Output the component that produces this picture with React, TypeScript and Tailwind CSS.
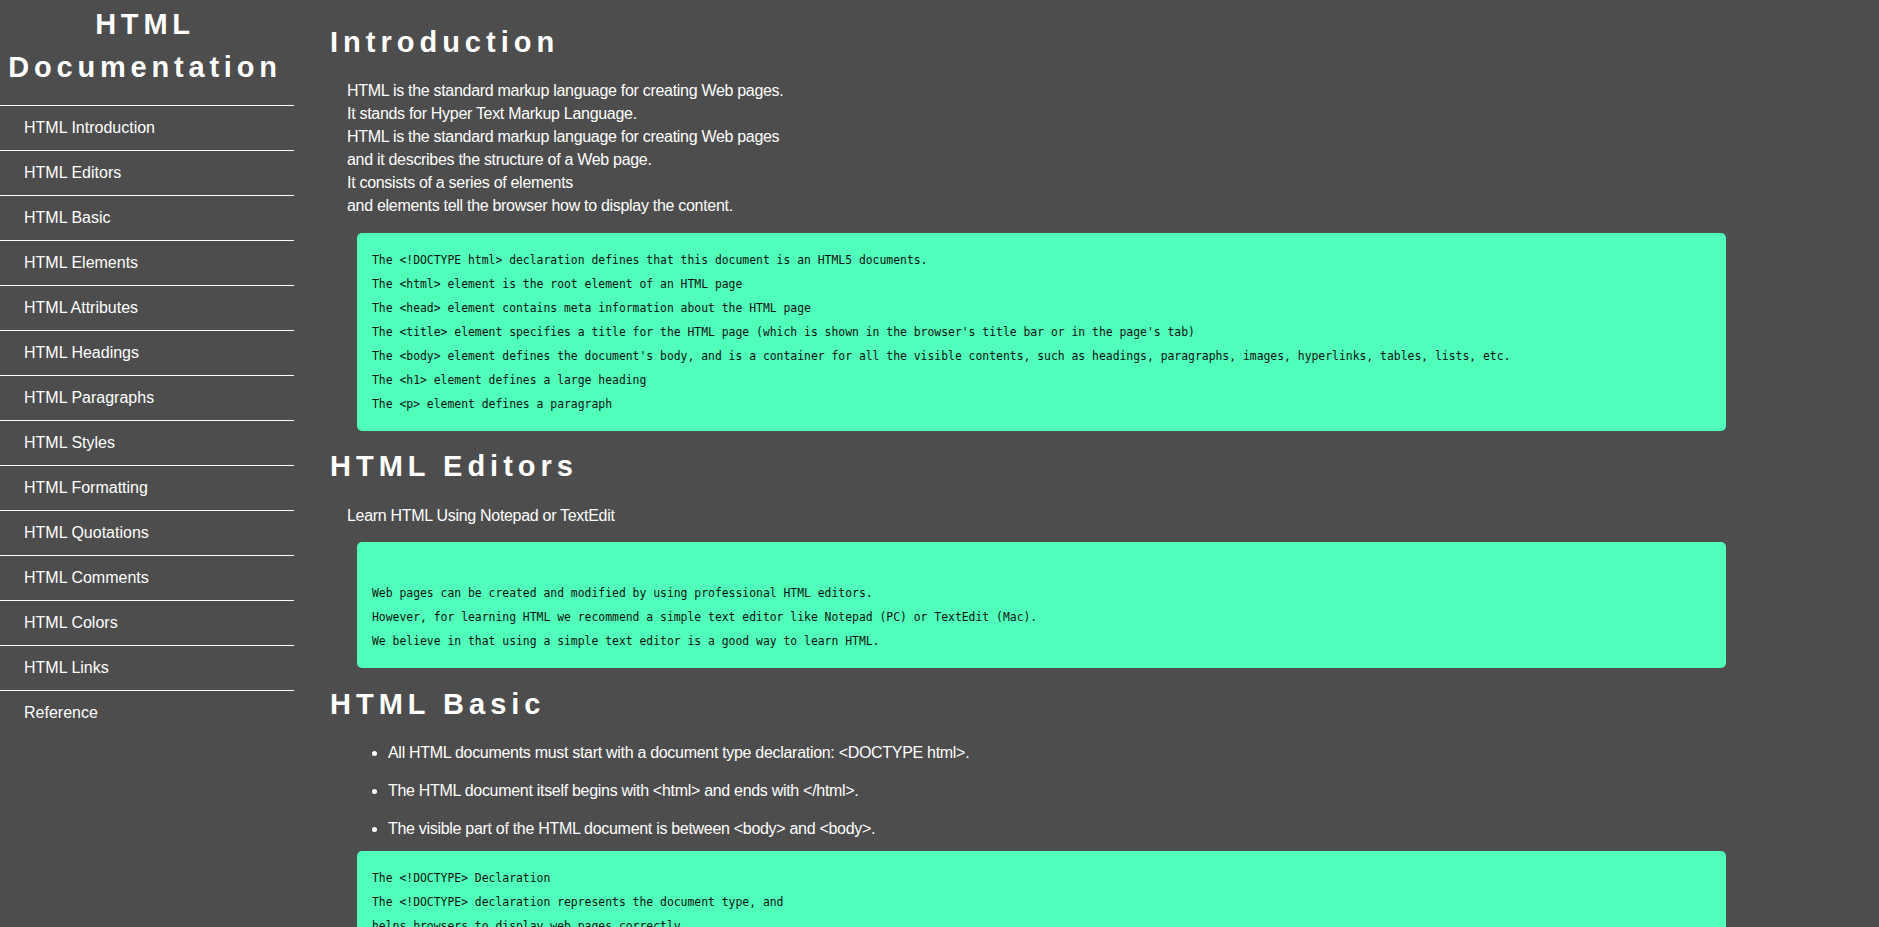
import React from "react";

const NAV = [
  "HTML Introduction",
  "HTML Editors",
  "HTML Basic",
  "HTML Elements",
  "HTML Attributes",
  "HTML Headings",
  "HTML Paragraphs",
  "HTML Styles",
  "HTML Formatting",
  "HTML Quotations",
  "HTML Comments",
  "HTML Colors",
  "HTML Links",
  "Reference",
];

const INTRO_CODE = [
  "The <!DOCTYPE html> declaration defines that this document is an HTML5 documents.",
  "The <html> element is the root element of an HTML page",
  "The <head> element contains meta information about the HTML page",
  "The <title> element specifies a title for the HTML page (which is shown in the browser's title bar or in the page's tab)",
  "The <body> element defines the document's body, and is a container for all the visible contents, such as headings, paragraphs, images, hyperlinks, tables, lists, etc.",
  "The <h1> element defines a large heading",
  "The <p> element defines a paragraph",
];

const EDITOR_CODE = [
  "",
  "Web pages can be created and modified by using professional HTML editors.",
  "However, for learning HTML we recommend a simple text editor like Notepad (PC) or TextEdit (Mac).",
  "We believe in that using a simple text editor is a good way to learn HTML.",
];

const BASIC_CODE = [
  "The <!DOCTYPE> Declaration",
  "The <!DOCTYPE> declaration represents the document type, and",
  "helps browsers to display web pages correctly.",
  "It must only appear once, at the top of the page (before any HTML tags).",
  "The <!DOCTYPE> declaration is not case sensitive.",
];

const CodeBox = ({ lines, className = "" }: { lines: string[]; className?: string }) => {
  return (
    <div
      className={`ml-[27px] w-[1369px] rounded-[5px] bg-[#50ffb9] px-[15px] py-[15px] text-[11.4px] leading-[24px] text-[#111] ${className}`}
      style={{ fontFamily: '"DejaVu Sans Mono", "Liberation Mono", monospace' }}
    >
      {lines.map((line, i) => (
        <div key={i} className="h-[24px] whitespace-pre">
          {line}
        </div>
      ))}
    </div>
  );
};

const Heading = ({ children, className = "" }: { children: React.ReactNode; className?: string }) => {
  return (
    <h1 className={`text-[29px] font-bold leading-[33px] tracking-[5px] text-white ${className}`}>
      {children}
    </h1>
  );
};

const Sidebar = () => {
  return (
    <nav className="flex w-[294px] shrink-0 flex-col">
      <div className="pr-[4px] pt-[3px] text-center text-[29px] font-bold leading-[43px] tracking-[4.8px] text-white">
        <div>HTML</div>
        <div>Documentation</div>
      </div>
      <ul className="mt-[16px]">
        {NAV.map((item) => (
          <li key={item} className="flex h-[45px] items-center border-t border-white pl-[24px] text-[16px] text-white">
            {item}
          </li>
        ))}
      </ul>
    </nav>
  );
};

export default function App() {
  return (
    <div
      className="flex h-[927px] w-full overflow-hidden bg-[#4d4d4d]"
      style={{ fontFamily: '"Liberation Sans", Arial, sans-serif' }}
    >
      <Sidebar />
      <main className="flex flex-1 flex-col pl-[36px] pt-[26px]">
        <Heading>Introduction</Heading>
        <div className="ml-[17px] mt-[20px] text-[16px] leading-[23px] tracking-[-0.3px] text-white">
          <div>HTML is the standard markup language for creating Web pages.</div>
          <div>It stands for Hyper Text Markup Language.</div>
          <div>HTML is the standard markup language for creating Web pages</div>
          <div>and it describes the structure of a Web page.</div>
          <div>It consists of a series of elements</div>
          <div>and elements tell the browser how to display the content.</div>
        </div>
        <CodeBox lines={INTRO_CODE} className="mt-[16px]" />

        <Heading className="mt-[19px]">HTML Editors</Heading>
        <p className="ml-[17px] mt-[21px] text-[16px] leading-[23px] tracking-[-0.3px] text-white">
          Learn HTML Using Notepad or TextEdit
        </p>
        <CodeBox lines={EDITOR_CODE} className="mt-[15px]" />

        <Heading className="mt-[20px]">HTML Basic</Heading>
        <ul className="mt-[20px] flex list-disc flex-col gap-[15px] pl-[58px] text-[16px] leading-[23px] tracking-[-0.3px] text-white">
          <li>All HTML documents must start with a document type declaration: &lt;DOCTYPE html&gt;.</li>
          <li>The HTML document itself begins with &lt;html&gt; and ends with &lt;/html&gt;.</li>
          <li>The visible part of the HTML document is between &lt;body&gt; and &lt;body&gt;.</li>
        </ul>
        <CodeBox lines={BASIC_CODE} className="mt-[11px]" />
      </main>
    </div>
  );
}
